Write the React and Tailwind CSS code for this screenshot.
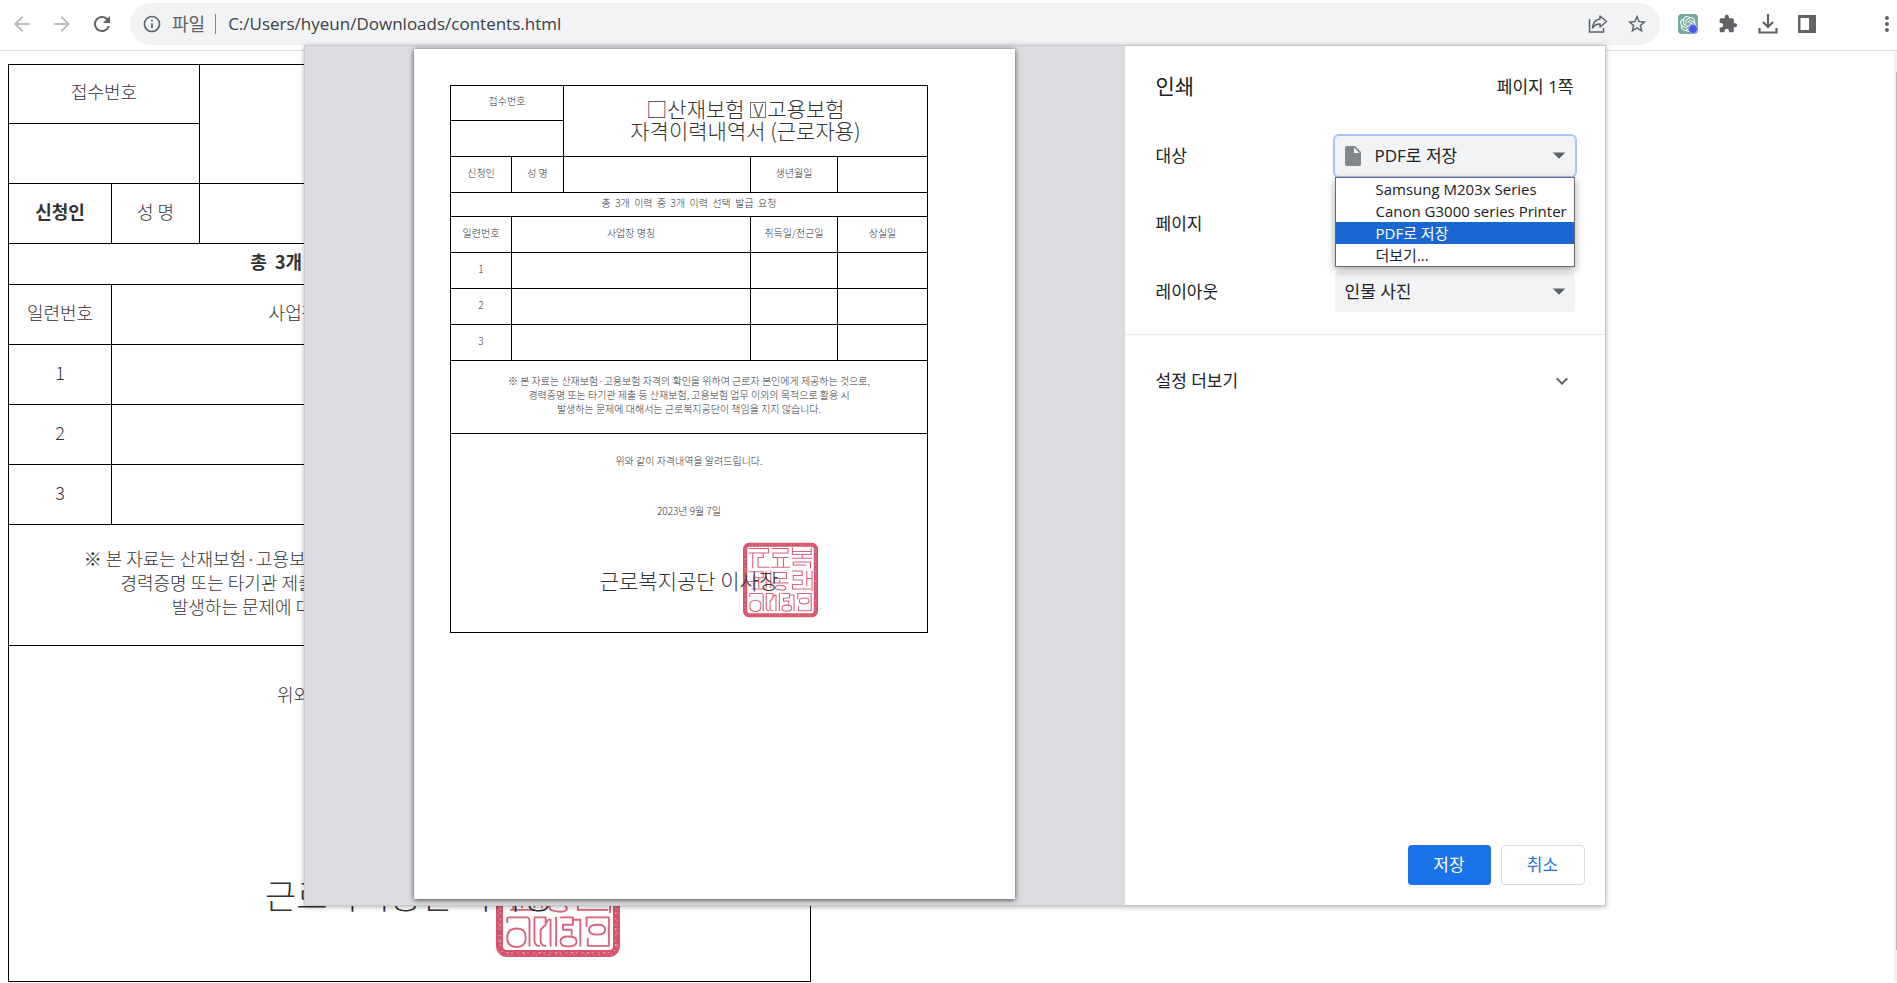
// ─────────────────────────────────────────────────────────────────────────────
// App.jsx
//
// Browser toolbar, the certificate page behind, and the print dialog on top.
// The certificate is drawn twice: full size in the page, small in the preview.
// ─────────────────────────────────────────────────────────────────────────────

import { useState } from 'react'
import {
  MdArrowBack,
  MdArrowForward,
  MdRefresh,
  MdInfoOutline,
  MdStarBorder,
  MdExtension,
  MdMoreVert,
  MdInsertDriveFile,
  MdArrowDropDown,
  MdExpandMore,
} from 'react-icons/md'
import { SiOpenai } from 'react-icons/si'
import clsx from 'clsx'

const PRINTERS = ['Samsung M203x Series', 'Canon G3000 series Printer', 'PDF로 저장', '더보기...']

// Every size the certificate needs, for the page and for the preview
const SIZES = {
  page: {
    table: 'text-lg leading-6 text-[#333]',
    cols: ['w-[103px]', 'w-[88px]', 'w-auto', 'w-[146px]', 'w-[152px]'],
    cell: 'pb-1.5',
    first: 'h-[59px]',
    row: 'h-[60px]',
    summary: 'h-[41px]',
    strong: 'font-bold',
    title: 'text-[34px] leading-9',
    notice: 'h-[121px]',
    closing: 'h-[336px] pt-9',
    date: 'mt-14',
    signer: 'mt-[83px] text-[34px] leading-[52px]',
    seal: 'w-[124px]',
  },
  preview: {
    table: 'text-[10px] leading-[14px] text-[#333]',
    cols: ['w-[61px]', 'w-[52px]', 'w-auto', 'w-[87px]', 'w-[90px]'],
    cell: 'pb-1',
    first: 'h-[35px]',
    row: 'h-9',
    summary: 'h-6',
    strong: 'font-light',
    title: 'text-[21px] leading-[22px]',
    notice: 'h-[73px]',
    closing: 'h-[199px] pt-5',
    date: 'mt-9',
    signer: 'mt-11 text-[21px] leading-9',
    seal: 'w-[75px]',
  },
}

// ── Red official seal ──
function Seal({ className }) {
  return (
    <svg viewBox="0 0 100 100" className={className} fill="none" aria-hidden="true">
      <rect x="2.8" y="2.8" width="94.4" height="94.4" rx="6" stroke="#d4536b" strokeWidth="5.6" />
      <rect x="3.4" y="3.4" width="93.2" height="93.2" rx="5" stroke="#eeb4bf" strokeWidth="0.9" strokeDasharray="1 2 2 3 1 4" />
      <rect x="1.8" y="1.8" width="96.4" height="96.4" rx="6" stroke="#e99aa8" strokeWidth="0.6" strokeDasharray="1 5 2 2" />
      <g stroke="#d9637a" strokeWidth="1.5" strokeLinecap="round" strokeLinejoin="round">
        {/* top row */}
        <path d="M8 8H34V14M8 14H34M13 14V34M20 20V33H35M20 20H27V14" />
        <path d="M39 8H60V14H40V20H60M40 14V20M46 20V32M54 20V32M38 33H62" />
        <path d="M66 7V16H91V7M66 12H91M79 16V21M66 21H92M67 26H90V34M67 26V30H84" />
        {/* middle row */}
        <path d="M8 39H27V47H14M14 43V62M8 52H21M21 47V60M12 62H31M31 38V60" />
        <path d="M37 38V60M41 40H58V48H42V53M37 54H60M49 50V54M44 62Q41 58 48 57Q58 57 57 62Q54 65 44 62Z" />
        <path d="M66 38H79V44H67V50H79V56H66V62H90M85 38V58M85 48H92M92 38V64" />
        {/* bottom row */}
        <path d="M9 72V69Q9 68 11 68H25Q27 68 27 72V91M17 77Q9 77 9 84.500Q9 92 17 92Q24 92 24 84.500Q24 77 17 77Z" />
        <path d="M31 69V86Q31 91 35 91M31 68H40V74L36 78V86Q36 91 40 91M44 70V91M44 70Q42 69 41 72" />
        <path d="M48.500 68V91M52 68H62V74H54V78H61V82M58 83.500Q52 83.500 52 87.500Q52 91.500 58 91.500Q65 91.500 65 87.500Q65 83.500 58 83.500ZM68 70V91M62 70H68" />
        <path d="M73 75V68H91V91M82 74Q75 74 75 78Q75 82 82 82Q88 82 88 78Q88 74 82 74ZM74 85V91H91" />
      </g>
    </svg>
  )
}

// ── The certificate itself ──
function Certificate({ size }) {
  const s = SIZES[size]
  const box = clsx('border border-black px-0 pt-0', s.cell)
  const cell = clsx(box, 'font-light')

  return (
    <table
      className={clsx(
        "w-full table-fixed border-collapse text-center font-['Noto_Sans_CJK_KR',sans-serif]",
        s.table,
      )}
    >
      <colgroup>
        {s.cols.map((w, i) => <col key={i} className={w} />)}
      </colgroup>
      <tbody>
        <tr className={s.first}>
          <td colSpan={2} className={cell}>접수번호</td>
          <td colSpan={3} rowSpan={2} className={clsx(cell, s.title)}>
            □산재보험{' '}
            <span className="mx-px inline-flex size-[0.9em] items-center justify-center border border-[#777] text-[0.85em] leading-none">
              V
            </span>
            고용보험
            <br />
            자격이력내역서 (근로자용)
          </td>
        </tr>
        <tr className={s.row}>
          <td colSpan={2} className={cell} />
        </tr>
        <tr className={s.row}>
          <th className={clsx(box, s.strong)}>신청인</th>
          <td className={cell}>성 명</td>
          <td className={cell} />
          <td className={cell}>생년월일</td>
          <td className={cell} />
        </tr>
        <tr className={s.summary}>
          <th colSpan={5} className={clsx(box, s.strong)}>
            총&nbsp; 3개&nbsp; 이력&nbsp; 중&nbsp; 3개&nbsp; 이력&nbsp; 선택&nbsp; 발급&nbsp; 요청
          </th>
        </tr>
        <tr className={s.row}>
          <th className={cell}>일련번호</th>
          <th colSpan={2} className={cell}>사업장 명칭</th>
          <th className={cell}>취득일/전근일</th>
          <th className={cell}>상실일</th>
        </tr>
        {[1, 2, 3].map((n) => (
          <tr key={n} className={s.row}>
            <td className={cell}>{n}</td>
            <td colSpan={2} className={cell} />
            <td className={cell} />
            <td className={cell} />
          </tr>
        ))}
        <tr>
          <td colSpan={5} className={clsx(cell, s.notice)}>
            ※ 본 자료는 산재보험·고용보험 자격의 확인을 위하여 근로자 본인에게 제공하는 것으로,
            <br />
            경력증명 또는 타기관 제출 등 산재보험, 고용보험 업무 이외의 목적으로 활용 시
            <br />
            발생하는 문제에 대해서는 근로복지공단이 책임을 지지 않습니다.
          </td>
        </tr>
        <tr>
          <td colSpan={5} className={clsx('border border-black px-0 pb-0 align-top font-light', s.closing)}>
            <p>위와 같이 자격내역을 알려드립니다.</p>
            <p className={s.date}>2023년 9월 7일</p>
            <p className={s.signer}>
              <span className="relative inline-block">
                <Seal className={clsx('absolute left-[80%] top-1/2 max-w-none -translate-y-1/2', s.seal)} />
                <span className="relative">근로복지공단 이사장</span>
              </span>
            </p>
          </td>
        </tr>
      </tbody>
    </table>
  )
}

// ── Browser toolbar ──
function Toolbar() {
  return (
    <header className="flex h-[51px] items-start border-b border-[#dadce0] bg-white pl-2.5 pt-[3px] text-[#5f6368]">
      <div className="flex h-[42px] items-center gap-4">
        <button aria-label="뒤로" className="text-[#babcbe]"><MdArrowBack className="size-6" /></button>
        <button aria-label="앞으로" className="text-[#babcbe]"><MdArrowForward className="size-6" /></button>
        <button aria-label="새로고침"><MdRefresh className="size-6" /></button>
      </div>
      <div className="ml-4 flex h-[42px] flex-1 items-center rounded-full bg-[#f1f3f4] pl-3 pr-3">
        <MdInfoOutline className="size-5 shrink-0" />
        <span className="ml-2.5 text-lg">파일</span>
        <span className="ml-2.5 h-5 w-px bg-[#80868b]" />
        <input
          aria-label="주소"
          defaultValue="C:/Users/hyeun/Downloads/contents.html"
          className="ml-3 min-w-0 flex-1 bg-transparent text-[17px] text-[#3c4043] outline-none"
        />
        <button aria-label="공유">
          <svg viewBox="0 0 20 20" className="size-5" fill="none" stroke="currentColor" strokeWidth="1.5">
            <path d="M1.5 5V18H15.5V14" />
            <path d="M12 2L18.5 7.5L12 13V10C9 9.8 6.500 11 4.500 14C5 9 7.500 5.500 12 5Z" strokeLinejoin="round" />
          </svg>
        </button>
        <button aria-label="북마크" className="ml-[18px]"><MdStarBorder className="size-[22px]" /></button>
      </div>
      <div className="-mr-0.5 flex h-[42px] items-center">
        <button aria-label="확장 프로그램 챗" className="relative ml-[18px] flex size-5 items-center justify-center rounded-sm bg-[#74aa9c]">
          <SiOpenai className="size-4 text-white" />
          <span className="absolute bottom-0 right-0 size-2.5 rounded-full border border-[#a5aaff] bg-[#4b55f0]" />
        </button>
        <button aria-label="확장 프로그램" className="ml-5"><MdExtension className="size-5" /></button>
        <button aria-label="다운로드" className="ml-5">
          <svg viewBox="0 0 20 20" className="size-5" fill="none" stroke="currentColor" strokeWidth="2.2">
            <path d="M10 0V12M5 8L10 13L15 8M1.500 14V18.500H18.500V14" />
          </svg>
        </button>
        <button aria-label="사이드 패널" className="ml-5">
          <svg viewBox="0 0 18 18" className="size-[18px]" fill="currentColor">
            <path fillRule="evenodd" d="M0 0H18V18H0ZM2.500 3V15H11V3Z" />
          </svg>
        </button>
        <button aria-label="메뉴" className="ml-[59px]"><MdMoreVert className="size-6" /></button>
      </div>
    </header>
  )
}

// ── Print settings, right side of the dialog ──
function PrintSettings() {
  const [target, setTarget] = useState('PDF로 저장')
  const [layout, setLayout] = useState('인물 사진')

  return (
    <section className="flex w-[480px] shrink-0 flex-col bg-white text-[17px] text-[#202124]">
      <div className="flex h-[76px] items-center justify-between px-[31px] pt-1.5">
        <h1 className="text-[21px]">인쇄</h1>
        <span>페이지 1쪽</span>
      </div>

      <div className="border-b border-[#e8eaed] pb-2">
        <div className="flex h-[68px] items-center justify-between pl-[31px] pr-[30px]">
          <label htmlFor="target">대상</label>
          <div className="relative w-60">
            <select
              id="target"
              value={target}
              onChange={(e) => setTarget(e.target.value)}
              className="h-10 w-full appearance-none rounded bg-[#f1f3f4] pl-10 outline-2 outline-[#a3c5fa]"
            >
              {PRINTERS.map((p) => <option key={p}>{p}</option>)}
            </select>
            <MdInsertDriveFile className="pointer-events-none absolute left-1.5 top-2 size-6 text-[#80868b]" />
            <MdArrowDropDown className="pointer-events-none absolute right-px top-1 size-[30px] text-[#5f6368]" />

            {/* Open list of printers */}
            <ul
              role="listbox"
              aria-label="대상"
              className="absolute inset-x-0 top-full z-10 mt-px border border-[#6b6b6b] bg-white shadow-[0_3px_8px_rgba(0,0,0,0.35)]"
            >
              {PRINTERS.map((p) => (
                <li
                  key={p}
                  role="option"
                  aria-selected={p === target}
                  onClick={() => setTarget(p)}
                  className={clsx(
                    'whitespace-nowrap pl-10 text-[15px] leading-[22px]',
                    p === target && 'bg-[#1967d2] text-white',
                  )}
                >
                  {p}
                </li>
              ))}
            </ul>
          </div>
        </div>
        <div className="flex h-[68px] items-center pl-[31px]">
          <span>페이지</span>
        </div>
        <div className="flex h-[68px] items-center justify-between pl-[31px] pr-[30px]">
          <label htmlFor="layout">레이아웃</label>
          <div className="relative w-60">
            <select
              id="layout"
              value={layout}
              onChange={(e) => setLayout(e.target.value)}
              className="h-10 w-full appearance-none rounded bg-[#f1f3f4] pl-2.5"
            >
              <option>인물 사진</option>
              <option>가로</option>
            </select>
            <MdArrowDropDown className="pointer-events-none absolute right-px top-1 size-[30px] text-[#5f6368]" />
          </div>
        </div>
      </div>

      <button className="flex h-[92px] items-center justify-between px-[31px]">
        설정 더보기
        <MdExpandMore className="size-6 text-[#5f6368]" />
      </button>

      <div className="mt-auto flex justify-end gap-2.5 p-5">
        <button className="h-10 w-[83px] rounded bg-[#1a73e8] text-white">저장</button>
        <button className="h-10 w-[84px] rounded border border-[#dadce0] text-[#1a73e8]">취소</button>
      </div>
    </section>
  )
}

export default function App() {
  return (
    <div className="relative min-h-screen overflow-hidden bg-white font-['Open_Sans','Noto_Sans_CJK_KR',sans-serif] text-base">
      <Toolbar />

      <div className="flex">
        <main className="flex-1 pl-2 pt-[13px]">
          <div className="w-[803px]">
            <Certificate size="page" />
          </div>
        </main>
        {/* scrollbar */}
        <div className="flex w-[3px] flex-col items-end bg-[#f1f1f1] pb-8 pt-[21px]">
          <div className="w-px flex-1 bg-[#b8b8b8]" />
        </div>
      </div>

      {/* ── Print dialog ── */}
      <div className="absolute inset-x-0 top-[45px] flex justify-center pl-3">
        <div role="dialog" aria-label="인쇄" className="flex w-[1302px] border border-[#c8cacd] shadow-[0_1px_5px_rgba(0,0,0,0.3)]">
          <div className="flex flex-1 justify-center bg-[#dadce0] pb-1.5 pt-[3px]">
            <div className="aspect-[601/850] w-[601px] bg-white pl-9 pr-[87px] pt-9 shadow-[0_1px_5px_rgba(0,0,0,0.7)]">
              <Certificate size="preview" />
            </div>
          </div>
          <PrintSettings />
        </div>
      </div>
    </div>
  )
}
